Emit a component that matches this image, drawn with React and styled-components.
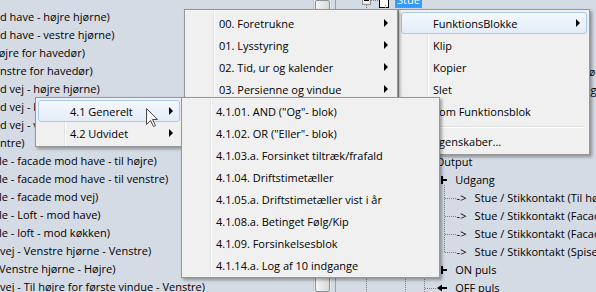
import React from "react";
import styled, { createGlobalStyle, css } from "styled-components";

const GlobalStyle = createGlobalStyle`
  * { box-sizing: border-box; }
  html, body { margin: 0; padding: 0; }
  body {
    width: 596px;
    height: 292px;
    overflow: hidden;
    font-family: "Open Sans", "Noto Sans", "Liberation Sans", sans-serif;
    font-size: 11px;
    color: #000;
    background: #d5dbe4;
  }
`;

const Screen = styled.div`
  position: relative;
  display: flex;
  width: 596px;
  height: 292px;
  overflow: hidden;
  background: #d5dbe4;
`;

/* ---------- left list ---------- */

const ListPane = styled.div`
  flex: 0 0 313px;
  padding-top: 8px;
  overflow: hidden;
`;

const ListRow = styled.div`
  height: 18px;
  line-height: 18px;
  white-space: nowrap;
  margin-left: ${p => p.$shift || 0}px;
`;

const ScrollTrack = styled.div`
  flex: 0 0 18px;
  display: flex;
  padding: 0 1px;
  background: #e8e8e8;
  border-left: 1px solid #c4c9d0;
`;

const ScrollThumb = styled.div`
  flex: 1;
  border: 1px solid #8e9196;
  border-radius: 2px;
  background: linear-gradient(to right, #f4f4f4, #e6e6e6 50%, #d9d9d9);
`;

const Splitter = styled.div`
  flex: 0 0 5px;
  border-right: 1px solid #9ba1a9;
`;

/* ---------- tree ---------- */

const TreePane = styled.div`
  position: relative;
  flex: 1;
  overflow: hidden;
`;

const Guides = styled.svg`
  position: absolute;
  left: 0;
  top: 0;
`;

const TreeList = styled.div`
  margin-top: -9px;
`;

const TreeRow = styled.div`
  display: flex;
  align-items: center;
  height: 18px;
  padding-left: ${p => 26 + p.$level * 19.4}px;
  white-space: nowrap;
`;

const Branch = styled.span`
  flex: 0 0 17px;
  height: 18px;
  display: flex;
  align-items: center;
  background: repeating-linear-gradient(to right, #7c7c7c 0 1px, transparent 1px 2px) no-repeat;
  background-size: ${p => (p.$box ? 8 : 12)}px 1px;
  background-position: ${p => (p.$box ? 9 : 5)}px 9px;
`;

const ExpandBox = styled.span`
  position: relative;
  width: 9px;
  height: 9px;
  border: 1px solid #939393;
  background: linear-gradient(#ffffff, #e6e6e6);

  &::after {
    content: "";
    position: absolute;
    left: 1px;
    top: 3px;
    width: 5px;
    height: 1px;
    background: #000;
  }
`;

const NodeIcon = styled.span`
  flex: 0 0 10px;
  height: 16px;
  display: flex;
  align-items: center;
  font-size: 11px;
  line-height: 16px;
`;

const NodeLabel = styled.span`
  margin-left: 6px;
  padding: 0 2px;
  height: 16px;
  line-height: 16px;
  ${p => p.$selected && css`
    background: #3399ff;
    color: #fff;
    outline: 1px dotted #c9892f;
    outline-offset: -1px;
  `}
`;

/* ---------- menus ---------- */

const Menu = styled.div`
  position: absolute;
  left: ${p => p.$x}px;
  top: ${p => p.$y}px;
  width: ${p => p.$w}px;
  z-index: ${p => p.$z};
  padding: 2px 2px ${p => p.$pb ?? 2}px;
  border: 1px solid #979797;
  background:
    linear-gradient(to right, transparent 28px, #e2e3e3 28px, #e2e3e3 29px, #fff 29px, #fff 30px, transparent 30px),
    #f0f0f0;
  box-shadow: 2px 2px 3px rgba(0, 0, 0, 0.35);
`;

const Item = styled.div`
  display: flex;
  align-items: center;
  height: 22px;
  padding: 0 6px 0 31px;
  border: 1px solid transparent;
  border-radius: 3px;
  white-space: nowrap;

  ${p => p.$active && css`
    border-color: #a9c9f0;
    background: linear-gradient(#f5f9fe, #e3ecf9);
  `}
`;

const ItemText = styled.span`
  flex: 1;
`;

const SubArrow = styled.span`
  width: 0;
  height: 0;
  border-top: 4px solid transparent;
  border-bottom: 4px solid transparent;
  border-left: 4px solid #000;
`;

const Separator = styled.div`
  height: 8px;
  margin: 0 2px 0 27px;
  background: linear-gradient(transparent 4px, #e0e0e0 4px, #e0e0e0 5px, #fff 5px, #fff 6px, transparent 6px);
`;

const Cursor = styled.svg`
  position: absolute;
  left: 146px;
  top: 108px;
  z-index: 10;
`;

/* ---------- data ---------- */

const listLines = [
  ["d have - højre hjørne)"],
  ["d have - vestre hjørne)"],
  ["højre for havedør)", -8],
  ["nstre for havedør)"],
  ["d vej - højre hjørne)"],
  ["d vej - højre for vindue)"],
  ["d vej - venstre for vindue)"],
  ["ntre)"],
  ["le - facade mod have - til højre)", -1],
  ["le - facade mod have - til venstre)", -1],
  ["le - facade mod vej)", -1],
  ["le - Loft - mod have)", -1],
  ["le - loft - mod køkken)", -1],
  ["vej - Venstre hjørne - Venstre)"],
  ["Venstre hjørne - Højre)", -1],
  ["vej - Til højre for første vindue - Venstre)"],
];

const treeRows = [
  { level: 0, branch: "box", icon: "device", label: "Stue", selected: true },
  { level: 1, branch: "box", icon: "device", label: "Lys og stik" },
  { level: 2, branch: "box", icon: "device", label: "Input" },
  { level: 3, branch: "box", icon: "pin", label: "Indgang" },
  { level: 4, branch: "dots", icon: "link", label: "Stue / Tryk (Ved havedør mod terrasse)" },
  { level: 4, branch: "dots", icon: "link", label: "Stue / Tryk (Ved dør til gang)" },
  { level: 3, branch: "dots", icon: "pin", label: "ON puls" },
  { level: 3, branch: "dots", icon: "pin", label: "OFF puls" },
  { level: 3, branch: "dots", icon: "pin", label: "Status" },
  { level: 2, branch: "box", icon: "device", label: "Output" },
  { level: 3, branch: "box", icon: "pin", label: "Udgang" },
  { level: 4, branch: "dots", icon: "link", label: "Stue / Stikkontakt (Til højre for vindue)" },
  { level: 4, branch: "dots", icon: "link", label: "Stue / Stikkontakt (Facade mod have)" },
  { level: 4, branch: "dots", icon: "link", label: "Stue / Stikkontakt (Facade mod vej)" },
  { level: 4, branch: "dots", icon: "link", label: "Stue / Stikkontakt (Spisebord)" },
  { level: 3, branch: "dots", icon: "pin", label: "ON puls" },
  { level: 3, branch: "dots", icon: "arrow", label: "OFF puls" },
];

// vertical dotted guides: [x, y1, y2] in tree pane coordinates
const guideLines = [
  [30.5, 5, 292],
  [49.5, 5, 18],
  [69.5, 23, 292],
  [88.5, 41, 144],
  [88.5, 167, 292],
  [108.5, 59, 90],
  [108.5, 185, 252],
];

const topMenu = [
  "00. Foretrukne",
  "01. Lysstyring",
  "02. Tid, ur og kalender",
  "03. Persienne og vindue",
  "04. Logik",
  "05. Alarm og sikring",
  "06. Energi",
];

const logicMenu = [
  '4.1.01. AND ("Og"- blok)',
  '4.1.02. OR ("Eller"- blok)',
  "4.1.03.a. Forsinket tiltræk/frafald",
  "4.1.04. Driftstimetæller",
  "4.1.05.a. Driftstimetæller vist i år",
  "4.1.08.a. Betinget Følg/Kip",
  "4.1.09. Forsinkelsesblok",
  "4.1.14.a. Log af 10 indgange",
];

const NodeGlyph = ({ kind }) => {
  if (kind === "device") {
    return (
      <svg width="10" height="16" viewBox="0 0 10 16">
        <rect x="0.5" y="0.5" width="9" height="15" fill="#fff" stroke="#000" />
      </svg>
    );
  }
  if (kind === "pin") {
    return (
      <svg width="10" height="10" viewBox="0 0 10 10">
        <rect x="4" y="1" width="2" height="8" fill="#000" />
        <rect x="6" y="4" width="4" height="2" fill="#000" />
      </svg>
    );
  }
  if (kind === "arrow") {
    return (
      <svg width="10" height="10" viewBox="0 0 10 10">
        <path d="M0 5 L5 1.5 L5 8.5 Z" fill="#000" />
        <rect x="5" y="4" width="5" height="2" fill="#000" />
      </svg>
    );
  }
  return <span>-&gt;</span>;
};

const App = () => {
  return (
    <>
      <GlobalStyle />
      <Screen>
        <ListPane>
          {listLines.map(([text, shift], i) => (
            <ListRow key={i} $shift={shift}>{text}</ListRow>
          ))}
        </ListPane>

        <ScrollTrack>
          <ScrollThumb />
        </ScrollTrack>
        <Splitter />

        <TreePane>
          <Guides width="260" height="292">
            {guideLines.map(([x, y1, y2], i) => (
              <line key={i} x1={x} x2={x} y1={y1} y2={y2} stroke="#7c7c7c" strokeDasharray="1 1" />
            ))}
          </Guides>
          <TreeList>
            {treeRows.map((row, i) => (
              <TreeRow key={i} $level={row.level}>
                <Branch $box={row.branch === "box"}>
                  {row.branch === "box" && <ExpandBox />}
                </Branch>
                <NodeIcon>
                  <NodeGlyph kind={row.icon} />
                </NodeIcon>
                <NodeLabel $selected={row.selected}>{row.label}</NodeLabel>
              </TreeRow>
            ))}
          </TreeList>
        </TreePane>

        {/* context menu on the tree node */}
        <Menu $x={398} $y={9} $w={192} $z={1}>
          <Item $active>
            <ItemText>FunktionsBlokke</ItemText>
            <SubArrow />
          </Item>
          <Item><ItemText>Klip</ItemText></Item>
          <Item><ItemText>Kopier</ItemText></Item>
          <Item><ItemText>Slet</ItemText></Item>
          <Item><ItemText>Som Funktionsblok</ItemText></Item>
          <Separator />
          <Item><ItemText>Egenskaber...</ItemText></Item>
        </Menu>

        <Menu $x={184} $y={9} $w={214} $z={2}>
          {topMenu.map(label => (
            <Item key={label}>
              <ItemText>{label}</ItemText>
              <SubArrow />
            </Item>
          ))}
        </Menu>

        <Menu $x={35} $y={97} $w={148} $z={3}>
          <Item $active>
            <ItemText>4.1 Generelt</ItemText>
            <SubArrow />
          </Item>
          <Item>
            <ItemText>4.2 Udvidet</ItemText>
            <SubArrow />
          </Item>
        </Menu>

        <Menu $x={181} $y={97} $w={259} $z={4} $pb={1}>
          {logicMenu.map(label => (
            <Item key={label}>
              <ItemText>{label}</ItemText>
            </Item>
          ))}
        </Menu>

        <Cursor width="13" height="20" viewBox="0 0 13 20">
          <path
            d="M0.5 0.5 L0.5 16.5 L4.5 12.5 L7.5 18.5 L9.5 17.5 L6.5 11.5 L11.5 11.5 Z"
            fill="#fafafa"
            stroke="#4a4a4a"
          />
        </Cursor>
      </Screen>
    </>
  );
};

export default App;
